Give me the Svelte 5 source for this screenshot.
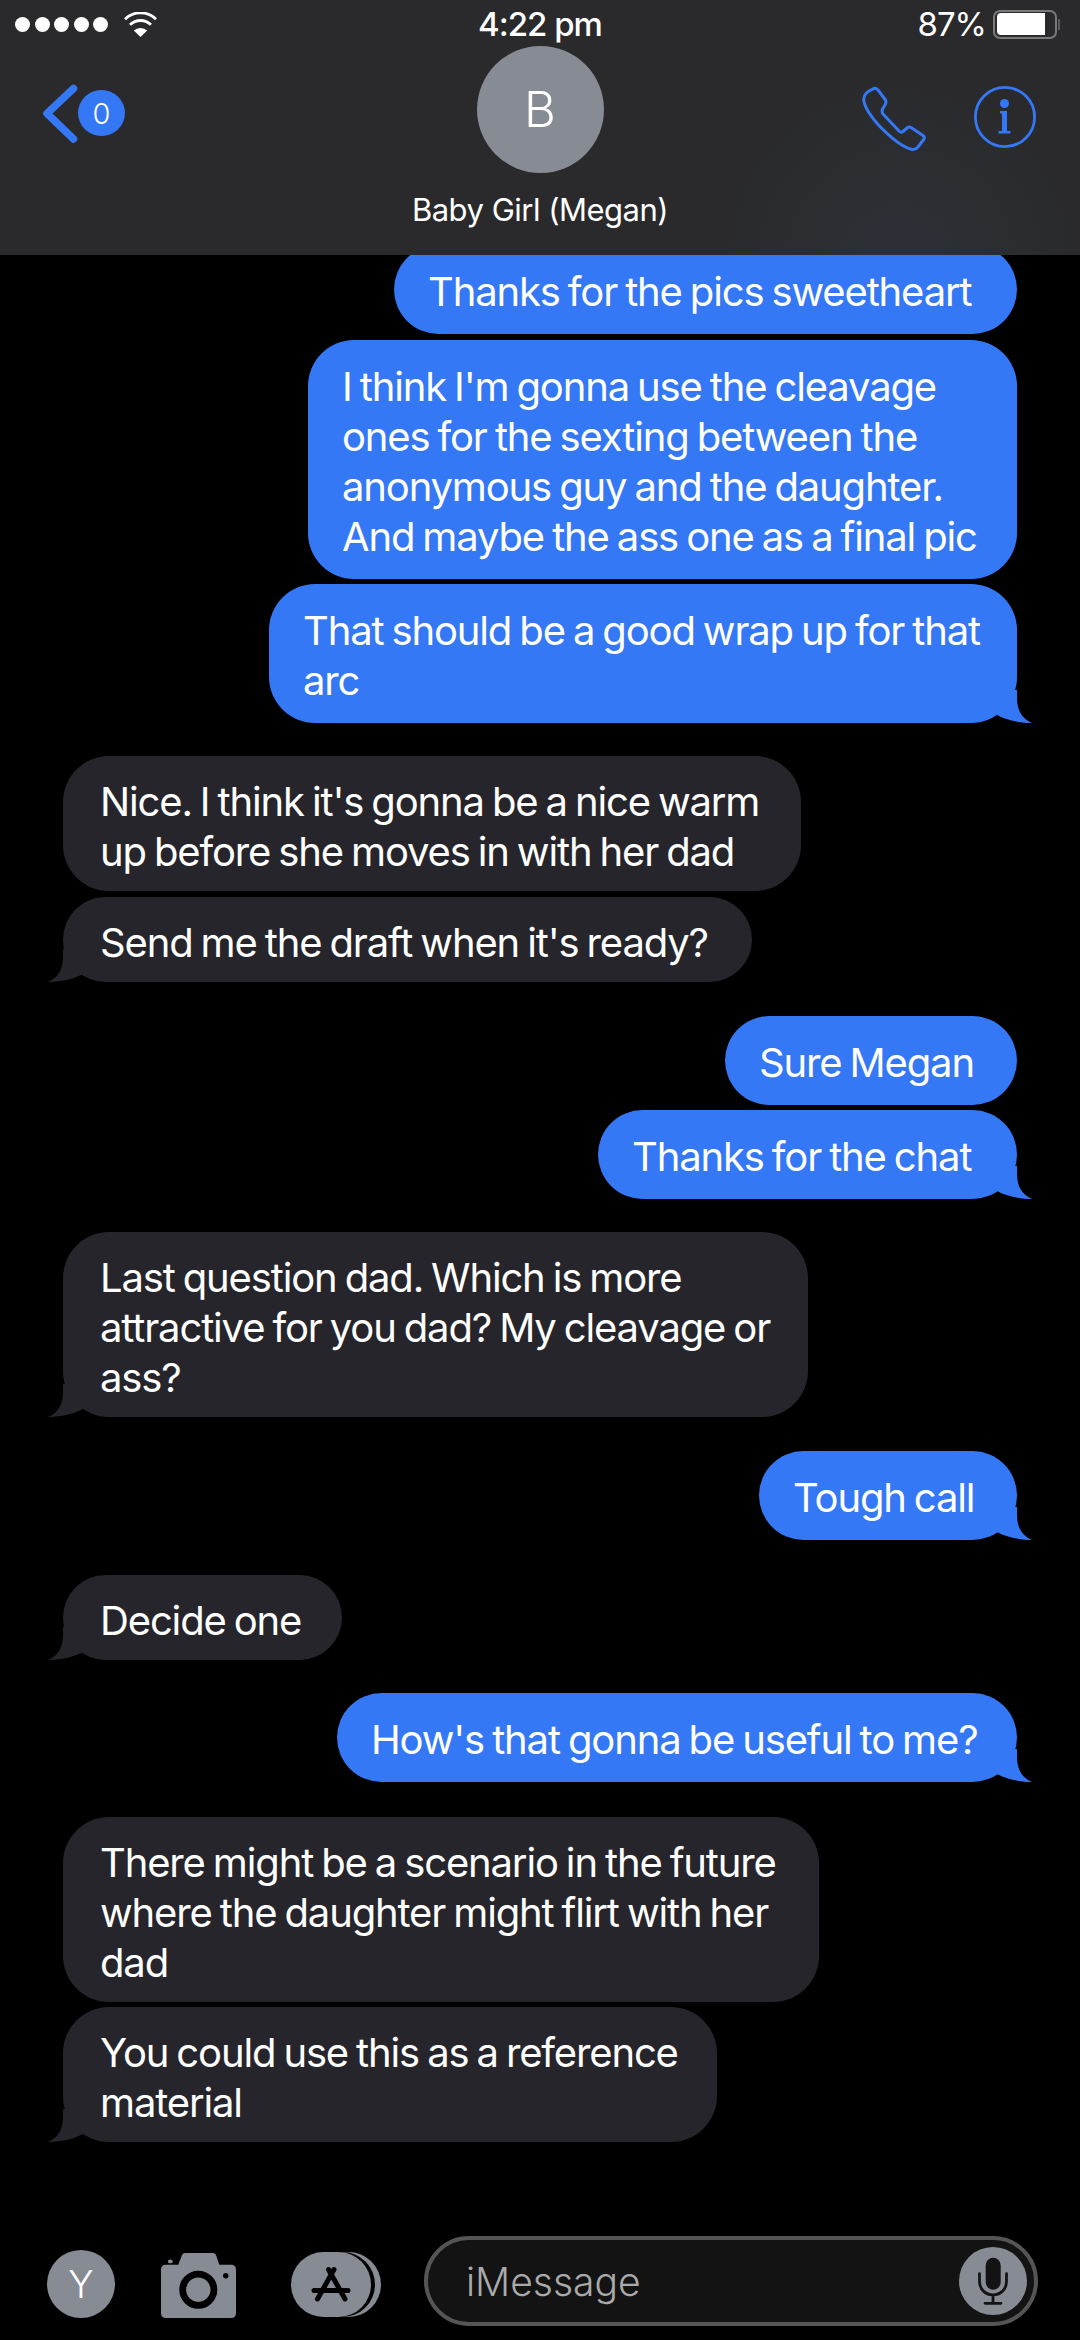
<script lang="ts">
    interface Message {
        lines: string[];
        mine: boolean;
        tail?: boolean;
        gap: number;
        width: number;
    }

    const messages: Message[] = [
        { lines: ["Thanks for the pics sweetheart"], mine: true, gap: 0, width: 623 },
        { lines: ["I think I'm gonna use the cleavage", "ones for the sexting between the", "anonymous guy and the daughter.", "And maybe the ass one as a final pic"], mine: true, gap: 6, width: 709 },
        { lines: ["That should be a good wrap up for that", "arc"], mine: true, tail: true, gap: 5, width: 748 },
        { lines: ["Nice. I think it's gonna be a nice warm", "up before she moves in with her dad"], mine: false, gap: 33, width: 738 },
        { lines: ["Send me the draft when it's ready?"], mine: false, tail: true, gap: 6, width: 689 },
        { lines: ["Sure Megan"], mine: true, gap: 34, width: 292 },
        { lines: ["Thanks for the chat"], mine: true, tail: true, gap: 5, width: 419 },
        { lines: ["Last question dad. Which is more", "attractive for you dad? My cleavage or", "ass?"], mine: false, tail: true, gap: 33, width: 745 },
        { lines: ["Tough call"], mine: true, tail: true, gap: 34, width: 258 },
        { lines: ["Decide one"], mine: false, tail: true, gap: 35, width: 279 },
        { lines: ["How's that gonna be useful to me?"], mine: true, tail: true, gap: 33, width: 680 },
        { lines: ["There might be a scenario in the future", "where the daughter might flirt with her", "dad"], mine: false, gap: 35, width: 756 },
        { lines: ["You could use this as a reference", "material"], mine: false, tail: true, gap: 5, width: 654 },
    ];
</script>

<div class="phone">
    <header>
        <div class="status">
            <div class="signal">
                <i></i><i></i><i></i><i></i><i></i>
                <svg class="wifi" width="33" height="25" viewBox="0 0 33 25">
                    <path d="M16.5 25 L9.8 18.5 A10 10 0 0 1 23.2 18.5 Z" fill="#fff" />
                    <path d="M6 12.8 A15 15 0 0 1 27 12.8" fill="none" stroke="#fff" stroke-width="2.8" />
                    <path d="M1 7.2 A22 22 0 0 1 32 7.2" fill="none" stroke="#fff" stroke-width="2.8" />
                </svg>
            </div>
            <span class="time">4:22 pm</span>
            <div class="battery">
                <span>87%</span>
                <div class="cell"><div class="charge"></div></div>
                <div class="nub"></div>
            </div>
        </div>
        <div class="nav">
            <div class="back">
                <svg width="38" height="60" viewBox="0 0 38 60">
                    <path d="M32.5 5.5 L6 30.5 L32.5 56" fill="none" stroke="#3478f6" stroke-width="7.5" stroke-linecap="round" stroke-linejoin="round" />
                </svg>
                <span class="count">0</span>
            </div>
            <div class="contact">
                <div class="avatar">B</div>
                <div class="name">Baby Girl (Megan)</div>
            </div>
            <div class="actions">
                <svg width="66" height="66" viewBox="0 0 66 66">
                    <path d="M13.3 2.3 Q15 2 17 4 L24.5 14 Q25.5 16 24.5 18 L21.5 23 Q20.5 26 22 28 L38 45 Q40 47 42 45.5 L46 42 Q48 40.5 50 41.5 L62 49.5 Q64 51 63 53 L57 61 Q54.5 64 51 63.5 C40 61 28 50 17 38.5 C8 28 3 20 2.7 13.5 Q3 8 8 5 Z" fill="none" stroke="#3478f6" stroke-width="3" stroke-linejoin="round" />
                </svg>
                <svg width="62" height="62" viewBox="0 0 62 62">
                    <circle cx="31" cy="31" r="29.6" fill="none" stroke="#3478f6" stroke-width="2.8" />
                    <circle cx="30.5" cy="17.5" r="4.5" fill="#3478f6" />
                    <path d="M26 25 H33 V45 H36.5 V47.5 H24.5 V45 H28 V27.5 H26 Z" fill="#3478f6" />
                </svg>
            </div>
        </div>
    </header>

    <main>
        {#each messages as message}
            <div class="row" class:mine={message.mine} style="margin-top: {message.gap}px">
                <div class="bubble" style="width: {message.width}px">
                    {#each message.lines as line}
                        <div>{line}</div>
                    {/each}
                    {#if message.tail}
                        <svg class="tailmark" width="48" height="33" viewBox="0 0 48 33">
                            <path d="M33 0 V8 C33 20 38 29 48 33 C38 33 24 31 13 25 L10 0 Z" />
                        </svg>
                    {/if}
                </div>
            </div>
        {/each}
    </main>

    <footer>
        <div class="tools">
            <div class="me">Y</div>
            <svg class="camera" width="75" height="65" viewBox="0 0 75 65">
                <path fill="#868b94" d="M17.3 11.7 L21 2 Q22 0 24 0 H52 Q54 0 55 2 L58.3 11.7 H70 Q75 11.7 75 16.7 V60 Q75 65 70 65 H5 Q0 65 0 60 V16.7 Q0 11.7 5 11.7 Z" />
                <circle cx="37.3" cy="36.7" r="15.6" fill="none" stroke="#000" stroke-width="6.8" />
                <circle cx="64.7" cy="22.7" r="2.7" fill="#000" />
                <ellipse cx="9.3" cy="8.4" rx="2.4" ry="1.9" fill="#868b94" />
            </svg>
            <div class="store">
                <svg width="42" height="40" viewBox="0 0 42 40">
                    <path d="M24 4.5 L7.5 34 M18.5 4.5 L35 34 M4 25.5 H38" fill="none" stroke="#000" stroke-width="5" stroke-linecap="round" />
                </svg>
            </div>
        </div>
        <div class="input">
            <span>iMessage</span>
            <div class="mic">
                <svg width="68" height="68" viewBox="0 0 68 68">
                    <rect x="26.7" y="10.7" width="15" height="32" rx="7.5" fill="#131313" />
                    <path d="M20.5 26.7 V34 C20.5 52.5 47.5 52.5 47.5 34 V26.7 M34 48 V56 M26 56.3 H42" fill="none" stroke="#131313" stroke-width="2.8" stroke-linecap="round" />
                </svg>
            </div>
        </div>
    </footer>
</div>

<style>
    :global(body) {
        background: #000;
    }

    .phone {
        width: 1080px;
        height: 2340px;
        overflow: hidden;
        display: flex;
        flex-direction: column;
        background: #000;
        color: #fff;
        font-family: Inter, "Liberation Sans", sans-serif;
    }

    header {
        flex: none;
        height: 255px;
        position: relative;
        z-index: 1;
        background: radial-gradient(circle at 900px 260px, #2c3036 0, #2a2a2c 190px);
    }

    .status {
        height: 50px;
        padding: 0 15px 2px;
        box-sizing: border-box;
        display: grid;
        grid-template-columns: 1fr auto 1fr;
        align-items: center;
        font-size: 33px;
    }

    .signal {
        display: flex;
        align-items: center;
        gap: 4.5px;
    }

    .signal i {
        width: 15px;
        height: 15px;
        border-radius: 50%;
        background: #fff;
    }

    .wifi {
        margin-left: 11px;
    }

    .time {
        font-weight: 500;
        letter-spacing: -1px;
    }

    .battery {
        display: flex;
        align-items: center;
        justify-content: flex-end;
        letter-spacing: -1px;
        padding-right: 5px;
    }

    .battery span {
        margin-right: 7px;
    }

    .cell {
        width: 64px;
        height: 29px;
        padding: 1.5px 2px;
        box-sizing: border-box;
        border: 2.5px solid #7a7a7a;
        border-radius: 7px;
    }

    .charge {
        height: 100%;
        width: 85%;
        background: #fff;
        border-radius: 4px 0 0 4px;
    }

    .nub {
        width: 2px;
        height: 11px;
        margin-left: 1px;
        background: #5c5c5c;
    }

    .nav {
        position: relative;
        height: 205px;
        display: flex;
        justify-content: space-between;
        padding: 0 44px 0 41px;
    }

    .back {
        display: flex;
        align-items: center;
        height: 60px;
        margin-top: 33px;
    }

    .count {
        width: 47px;
        height: 46px;
        margin-left: -1px;
        border-radius: 50%;
        background: #3478f6;
        font-size: 29px;
        font-weight: 300;
        display: flex;
        align-items: center;
        justify-content: center;
    }

    .contact {
        position: absolute;
        left: 0;
        right: 0;
        top: -4px;
        display: flex;
        flex-direction: column;
        align-items: center;
    }

    .avatar {
        width: 127px;
        height: 127px;
        border-radius: 50%;
        background: #868b94;
        font-size: 49px;
        font-weight: 300;
        display: flex;
        align-items: center;
        justify-content: center;
    }

    .name {
        margin-top: 18px;
        font-size: 31px;
        letter-spacing: -0.5px;
    }

    .actions {
        display: flex;
        align-items: flex-start;
        gap: 47px;
        margin-top: 36px;
    }

    main {
        flex: 1;
        min-height: 0;
        display: flex;
        flex-direction: column;
        margin-top: -10px;
        padding: 0 63px;
    }

    .row {
        display: flex;
    }

    .row.mine {
        justify-content: flex-end;
    }

    .bubble {
        position: relative;
        box-sizing: border-box;
        padding: 20.5px 0 14.5px 37px;
        border-radius: 46px;
        background: #26252b;
        font-size: 40px;
        line-height: 50px;
        letter-spacing: -1.15px;
        word-spacing: -2px;
        white-space: nowrap;
    }

    .mine .bubble {
        padding: 22px 0 17px 34px;
        background: #3478f6;
    }

    .tailmark {
        position: absolute;
        bottom: 0;
        left: -15px;
        fill: #26252b;
        transform: scaleX(-1);
    }

    .mine .tailmark {
        left: auto;
        right: -15px;
        fill: #3478f6;
        transform: none;
    }

    footer {
        flex: none;
        height: 140px;
        box-sizing: border-box;
        padding: 36px 0 0 47px;
        display: flex;
        align-items: flex-start;
    }

    .tools {
        height: 82px;
        display: flex;
        align-items: flex-end;
    }

    .me {
        width: 68px;
        height: 68px;
        border-radius: 50%;
        background: #868b94;
        font-size: 38px;
        font-weight: 300;
        display: flex;
        align-items: center;
        justify-content: center;
    }

    .camera {
        margin-left: 46px;
    }

    .store {
        width: 80px;
        height: 65px;
        margin: 0 0 1px 55px;
        border-radius: 33px;
        background: #868b94;
        box-shadow: 4px 0 0 #000, 10px 0 0 #868b94;
        display: flex;
        align-items: center;
        justify-content: center;
    }

    .input {
        width: 614px;
        height: 90px;
        margin-left: 53px;
        box-sizing: border-box;
        border: 4px solid #555;
        border-radius: 45px;
        background: #131313;
        display: flex;
        align-items: center;
        justify-content: space-between;
        padding: 0 7px 0 38px;
        color: #aaa;
        font-size: 39px;
        font-weight: 300;
    }

    .mic {
        width: 68px;
        height: 68px;
        border-radius: 50%;
        background: #868b94;
    }

    .mic svg {
        display: block;
    }
</style>
